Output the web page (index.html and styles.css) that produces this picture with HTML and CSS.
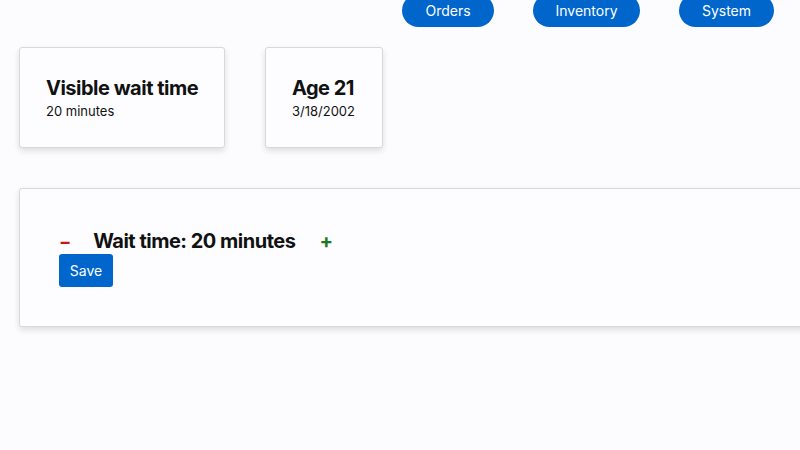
FILE: index.html
```html
<!DOCTYPE html>
<html>

<head>
    <title>Wait time</title>
    <link rel="stylesheet" href="styles.css">
</head>

<body>
    <div class="nav">
        <button class="nav-btn">Orders</button>
        <button class="nav-btn">Inventory</button>
        <button class="nav-btn">System</button>
    </div>

    <div class="cards">
        <div class="card wait-card">
            <h2>Visible wait time</h2>
            <p>20 minutes</p>
        </div>
        <div class="card age-card">
            <h2>Age 21</h2>
            <p>3/18/2002</p>
        </div>
    </div>

    <div class="editor">
        <div class="editor-row">
            <span class="minus">&minus;</span>
            <h2>Wait time: 20 minutes</h2>
            <span class="plus">+</span>
        </div>
        <button class="save">Save</button>
    </div>
</body>

</html>
```

FILE: styles.css
```css
body {
    margin: 0;
    background-color: #fcfcfe;
    font-family: Inter, "Open Sans", sans-serif;
    color: #111;
    overflow: hidden;
    width: 800px;
    height: 450px;
}

.nav {
    display: flex;
    justify-content: flex-end;
    gap: 39px;
    padding-right: 26px;
    margin-top: -6px;
}

.nav-btn {
    background-color: #0066cc;
    color: white;
    border: none;
    border-radius: 17px;
    height: 33px;
    padding: 0;
    font-family: inherit;
    font-size: 14px;
}

.nav-btn:nth-child(1) { width: 92px; }
.nav-btn:nth-child(2) { width: 107px; }
.nav-btn:nth-child(3) { width: 95px; }

.cards {
    display: flex;
    gap: 40px;
    margin-top: 20px;
    margin-left: 19px;
}

.card {
    box-sizing: border-box;
    height: 101px;
    background-color: #fdfdff;
    border: 1px solid #d8d8d8;
    border-radius: 3px;
    box-shadow: 0 3px 6px rgba(0, 0, 0, 0.12);
    padding: 28px 0 0 26px;
    white-space: nowrap;
}

.wait-card { width: 206px; }
.age-card { width: 118px; }

.card h2 {
    margin: 0;
    font-size: 20px;
    font-weight: 700;
    letter-spacing: -0.5px;
    line-height: 24px;
}

.card p {
    margin: 2px 0 0 0;
    font-size: 13px;
    line-height: 18px;
}

.editor {
    box-sizing: border-box;
    margin-top: 40px;
    margin-left: 19px;
    width: 800px;
    height: 139px;
    background-color: #fdfdff;
    border: 1px solid #d8d8d8;
    border-radius: 3px;
    box-shadow: 0 3px 6px rgba(0, 0, 0, 0.12);
    padding: 39px 0 0 39px;
}

.editor-row {
    display: flex;
    align-items: center;
    gap: 26px;
    height: 26px;
}

.editor-row h2 {
    margin: 0;
    font-size: 20px;
    font-weight: 700;
    letter-spacing: -0.5px;
}

.minus {
    color: #c9190b;
    font-weight: 700;
    font-size: 18px;
    margin-right: -4px;
}

.plus {
    color: #1e7a1e;
    font-weight: 700;
    font-size: 20px;
    margin-left: -2px;
}

.save {
    background-color: #0066cc;
    color: white;
    border: none;
    border-radius: 3px;
    width: 54px;
    height: 33px;
    font-family: inherit;
    font-size: 14px;
}
```
